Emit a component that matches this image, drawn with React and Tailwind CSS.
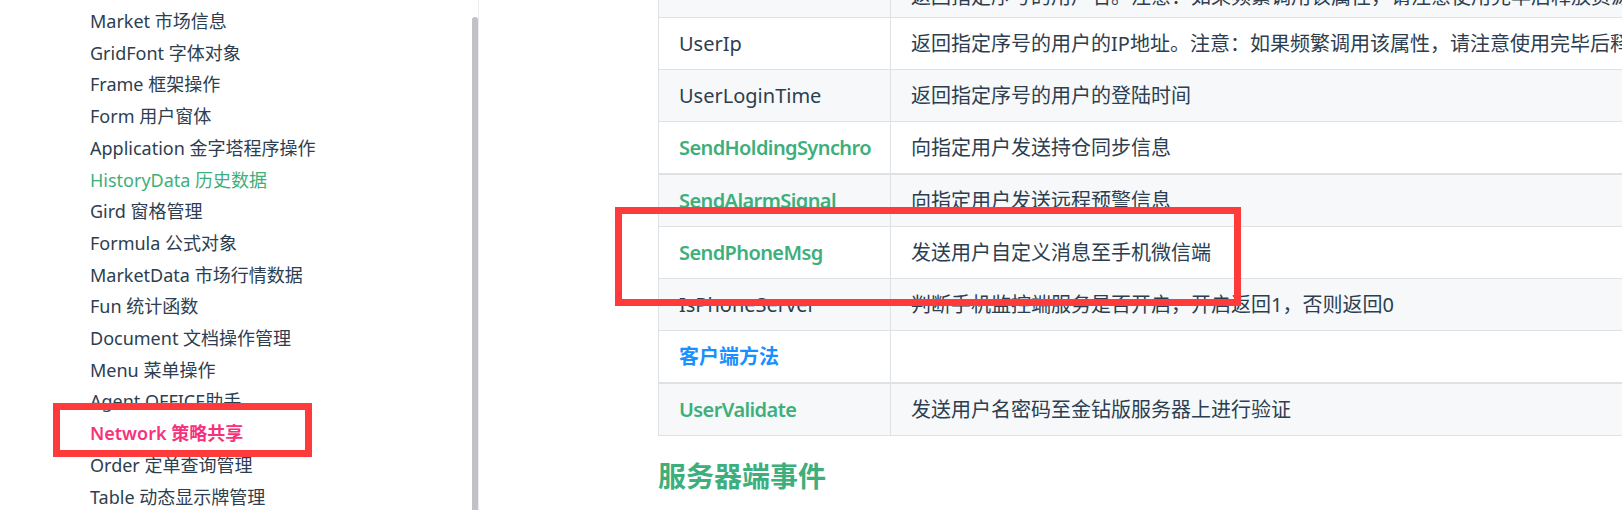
import React from 'react';

const navItems = [
  { label: 'Market 市场信息' },
  { label: 'GridFont 字体对象' },
  { label: 'Frame 框架操作' },
  { label: 'Form 用户窗体' },
  { label: 'Application 金字塔程序操作' },
  { label: 'HistoryData 历史数据', state: 'visited' },
  { label: 'Gird 窗格管理' },
  { label: 'Formula 公式对象' },
  { label: 'MarketData 市场行情数据' },
  { label: 'Fun 统计函数' },
  { label: 'Document 文档操作管理' },
  { label: 'Menu 菜单操作' },
  { label: 'Agent OFFICE助手' },
  { label: 'Network 策略共享', state: 'active' },
  { label: 'Order 定单查询管理' },
  { label: 'Table 动态显示牌管理' },
];

// kind: plain | link | group ; thick = double top border ; alt = striped bg
const rows = [
  { name: '', desc: '返回指定序号的用户名。注意：如果频繁调用该属性，请注意使用完毕后释放资源，否则会占用服务器内存', alt: true, first: true },
  { name: 'UserIp', desc: '返回指定序号的用户的IP地址。注意：如果频繁调用该属性，请注意使用完毕后释放资源，否则会占用服务器内存' },
  { name: 'UserLoginTime', desc: '返回指定序号的用户的登陆时间', alt: true },
  { name: 'SendHoldingSynchro', desc: '向指定用户发送持仓同步信息', kind: 'link' },
  { name: 'SendAlarmSignal', desc: '向指定用户发送远程预警信息', kind: 'link', alt: true, thick: true },
  { name: 'SendPhoneMsg', desc: '发送用户自定义消息至手机微信端', kind: 'link' },
  { name: 'IsPhoneServer', desc: '判断手机监控端服务是否开启，开启返回1，否则返回0', alt: true },
  { name: '客户端方法', desc: '', kind: 'group' },
  { name: 'UserValidate', desc: '发送用户名密码至金钻版服务器上进行验证', kind: 'link', alt: true, thick: true },
];

const nameClass = {
  plain: 'text-[#2c3e50]',
  link: 'text-[#3eaf7c] font-semibold tracking-[-0.6px]',
  group: 'text-[#1890ff] font-bold',
};

const Sidebar = () => (
  <aside className="w-[479px] shrink-0 flex border-r border-[#eaecef] bg-white">
    <ul className="flex-1 pt-[6px] pl-[90px]">
      {navItems.map(item => (
        <li
          key={item.label}
          className={
            'text-[18px] leading-[31.7px] whitespace-nowrap ' +
            (item.state === 'active'
              ? 'text-[#f7317a] font-semibold'
              : item.state === 'visited'
              ? 'text-[#3eaf7c]'
              : 'text-[#2c3e50]')
          }
        >
          {item.label}
        </li>
      ))}
    </ul>
    <div className="w-[6px] pt-[17px]">
      <div className="h-full bg-[#c1c1c6] rounded-t-[3px]" />
    </div>
  </aside>
);

const ApiTable = () => (
  <div className="w-[1500px] border-b border-[#dfe2e5]">
    {rows.map((row, i) => (
      <div
        key={i}
        className={
          'flex text-[20px] leading-[27px] border-[#dfe2e5] ' +
          (row.thick ? 'border-t-2 h-[53px] ' : 'border-t h-[52px] ') +
          (row.alt ? 'bg-[#f6f8fa]' : 'bg-white')
        }
      >
        <div
          className={
            'w-[232px] shrink-0 flex items-center border-l border-[#dfe2e5] pl-[20px] ' +
            (row.first ? 'pt-[9px] ' : '') +
            nameClass[row.kind || 'plain']
          }
        >
          {row.name}
        </div>
        <div
          className={
            'flex-1 flex items-center border-l border-[#dfe2e5] pl-[20px] whitespace-nowrap text-[#2c3e50] ' +
            (row.first ? 'pt-[9px]' : '')
          }
        >
          {row.desc}
        </div>
      </div>
    ))}
  </div>
);

export default function App() {
  return (
    <div className="relative w-[1622px] h-[510px] overflow-hidden bg-white flex font-['Noto_Sans','Noto_Sans_CJK_SC',sans-serif]">
      <Sidebar />
      <main className="flex-1 min-w-0 pl-[179px] -mt-[35px]">
        <ApiTable />
        <h2 className="mt-[23px] text-[28px] leading-[35px] font-bold text-[#3eaf7c]">服务器端事件</h2>
      </main>

      {/* annotation boxes */}
      <div className="absolute left-[53px] top-[403px] w-[259px] h-[54px] border-[7px] border-[#fe3a3a]" />
      <div className="absolute left-[615px] top-[207px] w-[626px] h-[99px] border-[7.5px] border-[#fe3a3a]" />
    </div>
  );
}
